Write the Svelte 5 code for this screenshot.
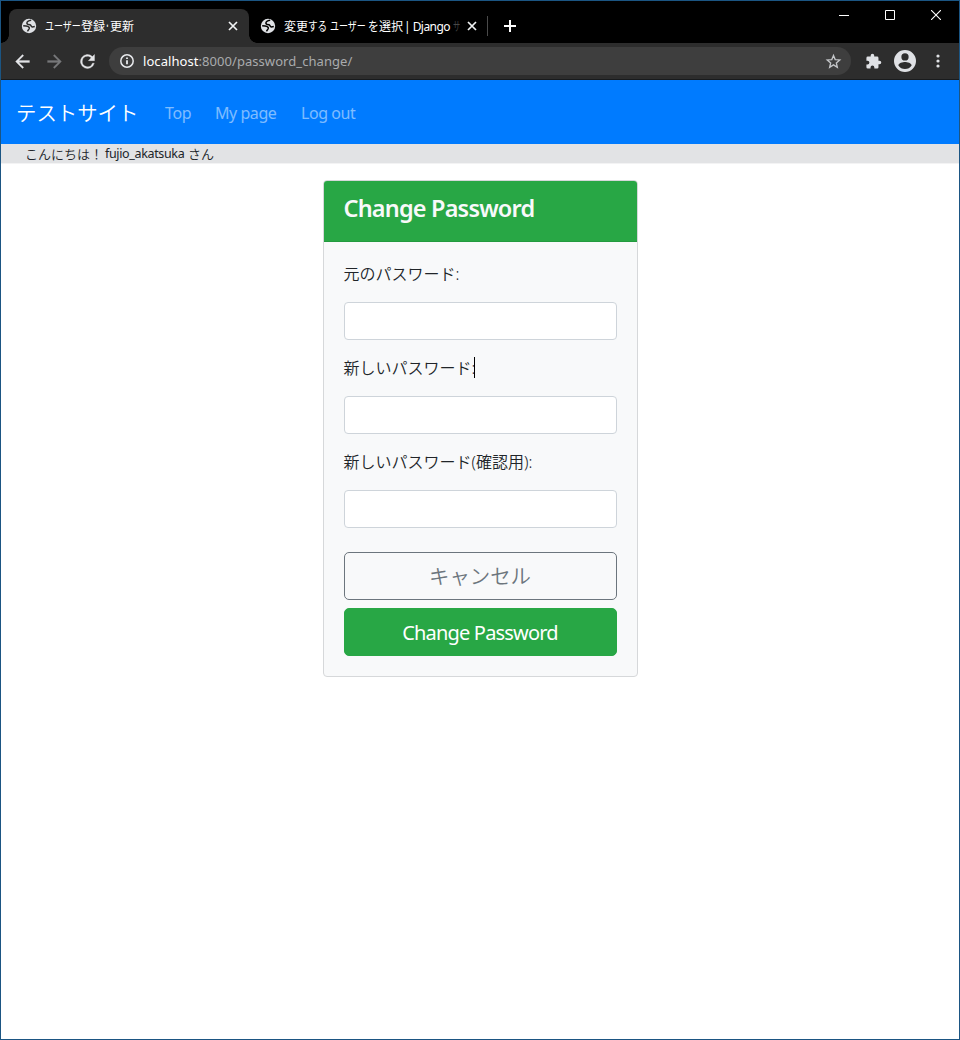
<script>
  const fields = [
    { id: 'old', label: '元のパスワード', suffix: ':', caret: false },
    { id: 'new1', label: '新しいパスワード', suffix: ':', caret: true },
    { id: 'new2', label: '新しいパスワード(確認用)', suffix: ':', caret: false }
  ];
</script>

{#snippet globe()}
  <svg class="globe" viewBox="0 0 16 16" width="16" height="16">
    <circle cx="8" cy="8" r="7.2" fill="#dfe1e5" />
    <path d="M10.200 2.200C7.700 2.500 6 3.700 5.900 5 5.800 6.500 7.500 6.700 9 6.800 10.200 7.200 10 8.700 11.300 8.900L13.800 8.600M2.200 7.800 5.200 8.100C7.300 8.500 8.500 9.200 8.300 10.400 8 11.600 6.800 12 6.600 13.400" fill="none" stroke="currentColor" stroke-width="1.5" />
  </svg>
{/snippet}

{#snippet cross()}
  <svg viewBox="0 0 10 10" width="10" height="10"><path d="M1 1 9 9M9 1 1 9" stroke="#f1f3f4" stroke-width="1.7" fill="none" /></svg>
{/snippet}

<div class="window">
  <header class="tabs">
    <div class="tab active">
      {@render globe()}
      <span class="title"><span class="kana k1">ユーザー</span><span>登録</span><span class="kana dot">・</span><span>更新</span></span>
      <span class="close">{@render cross()}</span>
    </div>
    <div class="tab other">
      {@render globe()}
      <span class="title"><span>変更</span><span class="kana k2">する</span><span class="kana k3">ユーザー</span><span class="kana k4">を</span><span>選択</span><span class="latin">| Django</span><span class="kana sa">サ</span></span>
      <span class="close">{@render cross()}</span>
    </div>
    <i class="divider"></i>
    <svg class="plus" viewBox="0 0 12 12" width="12" height="12"><path d="M6 0V12M0 6H12" stroke="#fff" stroke-width="2" /></svg>
    <div class="controls">
      <svg viewBox="0 0 10 10" width="10" height="10"><path d="M0 5.500H10" stroke="#fff" /></svg>
      <svg viewBox="0 0 10 10" width="10" height="10"><path d="M.500 .500H9.500V9.500H.500Z" stroke="#fff" fill="none" /></svg>
      <svg viewBox="0 0 10 10" width="10" height="10"><path d="M0 0 10 10M10 0 0 10" stroke="#fff" stroke-width="1.1" /></svg>
    </div>
  </header>

  <div class="toolbar">
    <svg class="back" viewBox="0 0 24 24" width="21" height="21" fill="#e4e5e8"><path d="M20 10.900H7.800l5.600-5.500L12 4l-8 8 8 8 1.400-1.400L7.800 13.100H20z" stroke="#e4e5e8" stroke-width=".3" /></svg>
    <svg class="fwd" viewBox="0 0 24 24" width="21" height="21" fill="#77787a"><path d="M4 10.900h12.200l-5.600-5.500L12 4l8 8-8 8-1.400-1.400 5.600-5.500H4z" stroke="#77787a" stroke-width=".3" /></svg>
    <svg class="reload" viewBox="0 0 24 24" width="21" height="21" fill="#e4e5e8"><path d="M17.650 6.350A8 8 0 1 0 19.730 14h-2.080A6 6 0 1 1 12 6c1.660 0 3.140.690 4.220 1.780L13 11h7V4z" stroke="#e4e5e8" stroke-width=".4" /></svg>
    <div class="address">
      <svg class="info" viewBox="0 0 16 16" width="16" height="16"><circle cx="8" cy="8" r="6.2" fill="none" stroke="#e8eaed" stroke-width="1.5" /><path d="M8 7.200V11.300M8 4.500V6" stroke="#e8eaed" stroke-width="1.8" /></svg>
      <span class="url"><b>localhost</b>:8000/password_change/</span>
      <svg class="star" viewBox="0 0 24 24" width="17" height="17"><path d="M12 3.500 14.400 9.300 20.800 9.800 16 14 17.400 20.100 12 16.800 6.600 20.100 8 14 3.200 9.800 9.600 9.300Z" fill="none" stroke="#c4c6c9" stroke-width="1.9" /></svg>
    </div>
    <svg class="puzzle" viewBox="0 0 24 24" width="17" height="17" fill="#dfe1e5"><path d="M20.500 11H19V7a2 2 0 0 0-2-2h-4V3.500a2.500 2.500 0 0 0-5 0V5H4a2 2 0 0 0-2 2v3.800h1.500a2.700 2.700 0 0 1 0 5.400H2V20a2 2 0 0 0 2 2h3.800v-1.500a2.700 2.700 0 0 1 5.400 0V22H17a2 2 0 0 0 2-2v-4h1.500a2.500 2.500 0 0 0 0-5z" /></svg>
    <svg class="avatar" viewBox="2 2 20 20" width="22" height="22" fill="#dfe1e5"><path d="M12 2a10 10 0 1 0 0 20 10 10 0 0 0 0-20zm0 3a3.300 3.300 0 1 1 0 6.600A3.300 3.300 0 0 1 12 5zm0 14.200a7.200 7.200 0 0 1-6-3.220c.030-1.990 4-3.080 6-3.080 1.990 0 5.970 1.090 6 3.080a7.200 7.200 0 0 1-6 3.220z" /></svg>
    <svg class="menu" viewBox="0 0 4 14" width="4" height="14" fill="#dfe1e5"><circle cx="2" cy="2" r="1.6" /><circle cx="2" cy="7" r="1.6" /><circle cx="2" cy="12" r="1.6" /></svg>
  </div>

  <nav>
    <a class="brand" href="#top">テストサイト</a>
    <a class="n1" href="#top">Top</a>
    <a class="n2" href="#mypage">My page</a>
    <a class="n3" href="#logout">Log out</a>
  </nav>
  <div class="greeting"><span class="g1">こんにちは！</span><span class="g2">fujio_akatsuka</span><span class="g3">さん</span></div>

  <main>
    <section class="card">
      <div class="head"><h4>Change Password</h4></div>
      <form>
        {#each fields as f (f.id)}
          <label for={f.id}>{f.label}{f.suffix}{#if f.caret}<i class="caret"></i>{/if}</label>
          <input id={f.id} type="password" />
        {/each}
        <button type="button" class="cancel">キャンセル</button>
        <button type="button" class="submit">Change Password</button>
      </form>
    </section>
  </main>
</div>

<style>
  :global(body) { margin: 0; background: #fff; }
  .window {
    box-sizing: border-box;
    width: 960px;
    height: 1040px;
    border: 1px solid #1b5583;
    background: #fff;
    color: #212529;
    font-family: "Noto Sans", "Noto Sans CJK JP", sans-serif;
    overflow: hidden;
  }
  svg { display: block; flex: none; }
  .tabs { display: flex; height: 42px; background: #000; align-items: flex-start; }
  .tab {
    display: flex;
    align-items: center;
    box-sizing: border-box;
    height: 34px;
    margin-top: 8px;
    color: #fff;
    font-size: 12px;
  }
  .active {
    position: relative;
    width: 240px;
    margin-left: 8px;
    padding-left: 12px;
    background: #2d2d2d;
    border-radius: 8px 8px 0 0;
  }
  .active::before, .active::after {
    content: "";
    position: absolute;
    bottom: 0;
    width: 8px;
    height: 8px;
  }
  .active::before { left: -8px; background: radial-gradient(circle at 0 0, #000 7.5px, #2d2d2d 8px); }
  .active::after { right: -8px; background: radial-gradient(circle at 100% 0, #000 7.5px, #2d2d2d 8px); }
  .other { width: 238px; padding-left: 11px; }
  .active .globe { color: #2d2d2d; }
  .other .globe { color: #000; }
  .title { display: flex; width: 177px; margin: 2px 0 0 8px; overflow: hidden; white-space: nowrap; line-height: 18px; height: 18px; }
  .title span { flex: none; }
  .kana { display: inline-block; transform-origin: 0 50%; }
  .k1 { width: 36px; transform: scaleX(0.75); }
  .dot { width: 5px; transform: scaleX(0.4); }
  .k2 { width: 22px; transform: scaleX(0.8); }
  .k3 { width: 38px; transform: scaleX(0.75); }
  .k4 { width: 11px; transform: scaleX(0.9); }
  .latin { margin-left: 1px; width: 49px; letter-spacing: -0.55px; }
  .sa { color: #484848; width: 7px; transform: scaleX(0.6); }
  .close { margin-left: 6px; }
  .divider { width: 1px; height: 20px; margin-top: 15px; background: #4a4a4a; }
  .plus { margin: 19px 0 0 16px; }
  .controls { display: flex; gap: 36px; margin: 9px 18px 0 auto; }

  .toolbar {
    display: flex;
    align-items: center;
    box-sizing: border-box;
    height: 37px;
    background: #2d2d2d;
    border-bottom: 1px solid #191b1d;
  }
  .back { margin-left: 11px; }
  .fwd { margin-left: 11px; }
  .reload { margin-left: 11.5px; }
  .address {
    display: flex;
    align-items: center;
    width: 742px;
    height: 28px;
    margin-left: 11.5px;
    border-radius: 14px;
    background: #3e3e3e;
    box-sizing: border-box;
    padding: 0 9.5px 0 10px;
  }
  .url { margin-left: 8px; color: #a9abad; font-size: 13px; letter-spacing: 0.06px; white-space: nowrap; }
  .url b { font-weight: 400; color: #fff; }
  .star { margin-left: auto; }
  .puzzle { margin-left: 13.5px; }
  .avatar { margin-left: 12.5px; }
  .menu { margin-left: 19.5px; }

  nav { display: flex; align-items: center; height: 64px; box-sizing: border-box; padding-top: 1px; background: #007bff; font-size: 16px; white-space: nowrap; }
  nav a { color: rgba(255, 255, 255, 0.5); text-decoration: none; line-height: 24px; }
  nav .brand { color: #fff; font-size: 20.4px; width: 122px; margin-left: 15px; font-weight: 350; }
  .n1 { width: 26px; margin-left: 27px; letter-spacing: -0.4px; }
  .n2 { width: 62px; margin-left: 24px; letter-spacing: -0.45px; }
  .n3 { margin-left: 24px; letter-spacing: -0.45px; }
  .greeting {
    display: flex;
    height: 19px;
    padding-left: 24px;
    background: #e2e3e5;
    font-size: 13px;
    line-height: 20px;
    font-weight: 350;
    white-space: nowrap;
    border-bottom: 1px solid #f3f3f4;
  }
  .g1 { width: 80px; }
  .g2 { width: 83px; font-size: 12.5px; font-weight: 400; letter-spacing: -0.35px; }

  main { display: flex; justify-content: center; padding-top: 16px; }
  .card {
    box-sizing: border-box;
    width: 315px;
    height: 497px;
    border: 1px solid #d6d8da;
    border-radius: 4px;
    background: #f8f9fa;
    overflow: hidden;
  }
  .head { box-sizing: border-box; height: 61px; padding: 12px 20px; background: #28a745; border-bottom: 1px solid #239a3f; }
  h4 { margin: 0; color: #f8f9fa; font-size: 23.5px; font-weight: 600; line-height: 31px; white-space: nowrap; letter-spacing: -0.82px; }
  form { display: flex; flex-direction: column; padding: 20px; }
  label { position: relative; height: 24px; font-size: 16px; line-height: 24px; white-space: nowrap; font-weight: 350; }
  .caret { position: absolute; left: 130px; top: 1px; width: 1px; height: 21px; background: #000; }
  input { box-sizing: border-box; height: 38px; margin: 16px 0; border: 1px solid #ced4da; border-radius: 4px; background: #fff; outline: 0; }
  button {
    box-sizing: border-box;
    height: 48px;
    padding: 2px 0 0;
    border-radius: 5px;
    font-family: inherit;
    font-size: 20px;
    line-height: 30px;
  }
  .cancel { margin: 8px 0; padding-top: 0; border: 1px solid #6c757d; background: transparent; color: #6c757d; font-size: 20.4px; font-weight: 350; }
  .submit { border: 1px solid #28a745; background: #28a745; color: #fff; letter-spacing: -0.82px; }
</style>
